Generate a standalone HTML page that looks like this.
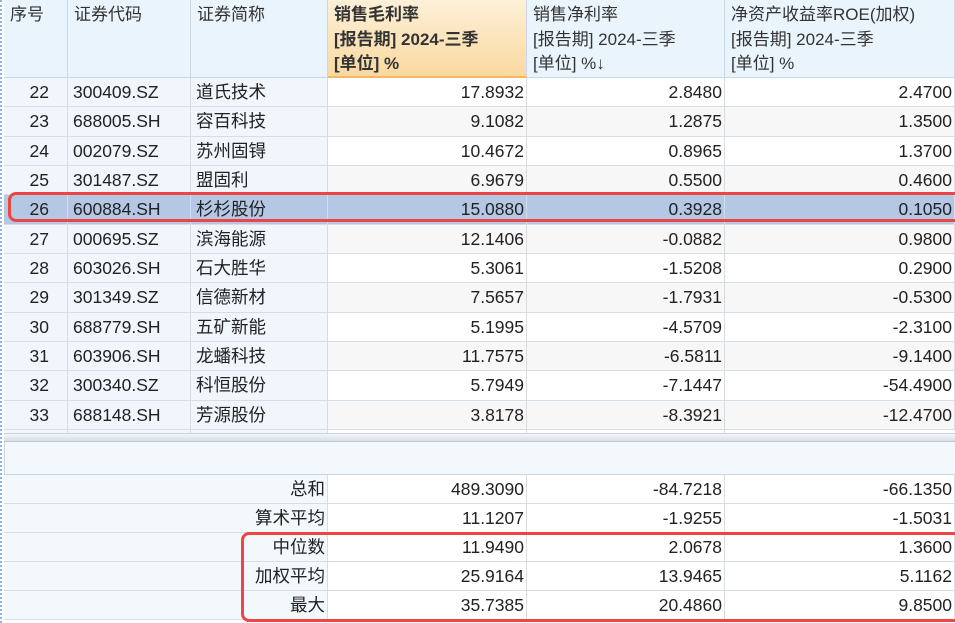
<!DOCTYPE html>
<html><head><meta charset="utf-8"><style>
*{margin:0;padding:0;box-sizing:border-box}
body{width:955px;height:623px;overflow:hidden;background:#fff;font-family:"Liberation Sans","Noto Sans CJK SC",sans-serif;font-size:17.5px;color:#222;position:relative}
.c{position:absolute;height:100%;top:0;border-right:1px solid #d6dde6;white-space:nowrap;line-height:29px}
.r{position:absolute;left:4px;width:951px;border-bottom:1px solid #d6dde6}
.hd{position:absolute;top:0;height:78px;border-right:1px solid #c7d9ee;border-bottom:1px solid #c7d9ee;background:#eaf4fd;padding:3px 6px;line-height:24.5px;font-size:17px;color:#333}
.num{text-align:right;padding-right:2px}
.box{position:absolute;border:3px solid #ef4444;border-radius:8px}
</style></head><body>
<div style="position:absolute;left:0;top:0;width:4px;height:623px;border-left:2px dotted #8fb3dd"></div>
<div class="hd" style="left:4px;width:64px">序号</div>
<div class="hd" style="left:68px;width:123px">证券代码</div>
<div class="hd" style="left:191px;width:137px">证券简称</div>
<div class="hd" style="left:328px;width:199px;background:linear-gradient(#fdf0d9,#fad9a0);border-bottom:2px solid #f4b860;font-weight:bold">销售毛利率<br>[报告期] 2024-三季<br>[单位] %</div>
<div class="hd" style="left:527px;width:198px">销售净利率<br>[报告期] 2024-三季<br>[单位] %↓</div>
<div class="hd" style="left:725px;width:230px">净资产收益率ROE(加权)<br>[报告期] 2024-三季<br>[单位] %</div>
<div id="rows"></div>
<script>
var d=[["22","300409.SZ","道氏技术","17.8932","2.8480","2.4700"],["23","688005.SH","容百科技","9.1082","1.2875","1.3500"],["24","002079.SZ","苏州固锝","10.4672","0.8965","1.3700"],["25","301487.SZ","盟固利","6.9679","0.5500","0.4600"],["26","600884.SH","杉杉股份","15.0880","0.3928","0.1050"],["27","000695.SZ","滨海能源","12.1406","-0.0882","0.9800"],["28","603026.SH","石大胜华","5.3061","-1.5208","0.2900"],["29","301349.SZ","信德新材","7.5657","-1.7931","-0.5300"],["30","688779.SH","五矿新能","5.1995","-4.5709","-2.3100"],["31","603906.SH","龙蟠科技","11.7575","-6.5811","-9.1400"],["32","300340.SZ","科恒股份","5.7949","-7.1447","-54.4900"],["33","688148.SH","芳源股份","3.8178","-8.3921","-12.4700"]];
var h="";
for(var i=0;i<d.length;i++){var t=Math.round(78+i*29.33),hh=Math.round(78+(i+1)*29.33)-t;var r=d[i];var sel=i==4;
var bg=sel?"#b4c8e6":(i%2?"#f7f7f7":"#fff");var lb=sel?"#b4c8e6":"#f0f6fc";
h+='<div class="r" style="top:'+t+'px;height:'+hh+'px;background:'+bg+'">'+
'<div class="c num" style="left:0;width:64px;padding-right:18px;background:'+lb+'">'+r[0]+'</div>'+
'<div class="c" style="left:64px;width:123px;padding-left:5px;background:'+lb+'">'+r[1]+'</div>'+
'<div class="c" style="left:187px;width:137px;padding-left:5px;background:'+lb+'">'+r[2]+'</div>'+
'<div class="c num" style="left:324px;width:199px">'+r[3]+'</div>'+
'<div class="c num" style="left:523px;width:198px">'+r[4]+'</div>'+
'<div class="c num" style="left:721px;width:230px">'+r[5]+'</div></div>';}
h+='<div class="r" style="top:430px;height:4px;background:#fff"><div class="c" style="left:0;width:64px;background:#f0f6fc"></div><div class="c" style="left:64px;width:123px;background:#f0f6fc"></div><div class="c" style="left:187px;width:137px;background:#f0f6fc"></div><div class="c" style="left:324px;width:199px"></div><div class="c" style="left:523px;width:198px"></div></div>';
h+='<div style="position:absolute;left:4px;top:433px;width:951px;height:9px;background:linear-gradient(#f4f6f9,#d9dee6);border-top:1px solid #c9d3df;border-bottom:1px solid #b9c6d6"></div>';
h+='<div style="position:absolute;left:4px;top:442px;width:951px;height:33px;background:#f3f8fd;border-left:1px solid #c9d6e6;border-bottom:1px solid #c9d6e6"></div>';
var s=[["总和","489.3090","-84.7218","-66.1350"],["算术平均","11.1207","-1.9255","-1.5031"],["中位数","11.9490","2.0678","1.3600"],["加权平均","25.9164","13.9465","5.1162"],["最大","35.7385","20.4860","9.8500"]];
for(var j=0;j<s.length;j++){var t=475+j*29;var r=s[j];
h+='<div class="r" style="top:'+t+'px;height:29px;background:#fff">'+
'<div class="c num" style="left:0;width:324px;background:#f3f8fd">'+r[0]+'</div>'+
'<div class="c num" style="left:324px;width:199px">'+r[1]+'</div>'+
'<div class="c num" style="left:523px;width:198px">'+r[2]+'</div>'+
'<div class="c num" style="left:721px;width:230px">'+r[3]+'</div></div>';}
document.getElementById("rows").innerHTML=h;
</script>
<div class="box" style="left:8px;top:192px;width:960px;height:30px"></div>
<div class="box" style="left:241px;top:532px;width:725px;height:90px"></div>
</body></html>
